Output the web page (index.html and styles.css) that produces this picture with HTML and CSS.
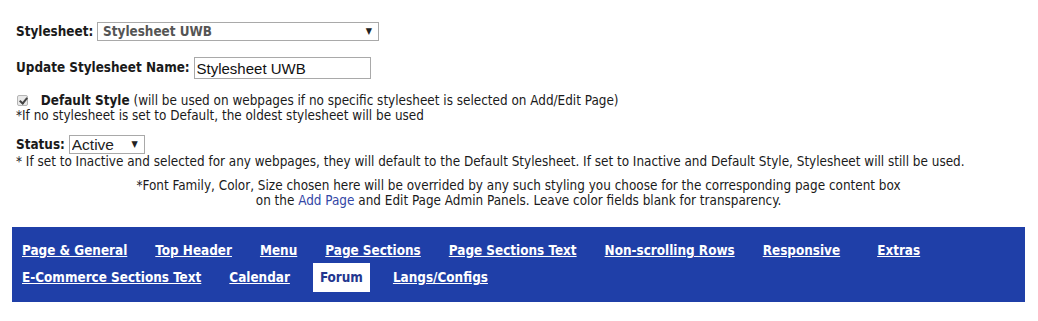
FILE: index.html
```html
<!DOCTYPE html>
<html lang="en">
<head>
  <meta charset="UTF-8">
  <title>Stylesheet Settings</title>
  <link rel="stylesheet" href="styles.css">
</head>
<body>
  <div class="settings">
    <div class="row row-first">
      <label class="label" for="sheetSelect">Stylesheet:</label>
      <span class="select-wrap">
        <select id="sheetSelect" class="select select-sheet">
          <option selected>Stylesheet UWB</option>
        </select>
        <span class="arrow">&#9660;</span>
      </span>
    </div>

    <div class="row row-name">
      <label class="label" for="sheetName">Update Stylesheet Name:</label>
      <input id="sheetName" class="text-input" type="text" value="Stylesheet UWB">
    </div>

    <div class="row row-default">
      <input id="defaultStyle" class="check" type="checkbox" checked>
      <label for="defaultStyle"><b>Default Style</b> (will be used on webpages if no specific stylesheet is selected on Add/Edit Page)</label>
      <div class="note">*If no stylesheet is set to Default, the oldest stylesheet will be used</div>
    </div>

    <div class="row row-status">
      <label class="label" for="statusSelect">Status:</label>
      <span class="select-wrap">
        <select id="statusSelect" class="select select-status">
          <option selected>Active</option>
          <option>Inactive</option>
        </select>
        <span class="arrow">&#9660;</span>
      </span>
      <div class="note">* If set to Inactive and selected for any webpages, they will default to the Default Stylesheet. If set to Inactive and Default Style, Stylesheet will still be used.</div>
    </div>

    <p class="center-note">
      *Font Family, Color, Size chosen here will be overrided by any such styling you choose for the corresponding page content box<br>
      on the <a href="#">Add Page</a> and Edit Page Admin Panels. Leave color fields blank for transparency.
    </p>
  </div>

  <div class="tabs">
    <div class="tab-row">
      <a href="#">Page &amp; General</a>
      <a href="#">Top Header</a>
      <a href="#">Menu</a>
      <a href="#">Page Sections</a>
      <a href="#">Page Sections Text</a>
      <a href="#">Non-scrolling Rows</a>
      <a href="#">Responsive</a>
      <a href="#" class="tab-wide">Extras</a>
    </div>
    <div class="tab-row">
      <a href="#">E-Commerce Sections Text</a>
      <a href="#">Calendar</a>
      <a href="#" class="active">Forum</a>
      <a href="#">Langs/Configs</a>
    </div>
  </div>
</body>
</html>
```

FILE: styles.css
```css
body {
  font-family: "DejaVu Sans Condensed", "DejaVu Sans", sans-serif;
  font-size: 13.4px;
  color: #1a1a1a;
  margin: 0;
  padding: 0 13px 0 12px;
}
.settings {
  padding: 22px 4px 0;
}
.row {
  line-height: 15px;
}
.label {
  font-weight: bold;
}
.select-wrap {
  position: relative;
  display: inline-block;
  vertical-align: middle;
}
.select {
  -webkit-appearance: none;
  appearance: none;
  border: 1px solid #a9a9a9;
  border-radius: 0;
  background: #fff;
  margin: 0;
  height: 19px;
  outline: none;
}
.select-sheet {
  width: 282px;
  padding: 0 0 0 5px;
  font-family: "DejaVu Sans Condensed", sans-serif;
  font-size: 13.4px;
  font-weight: bold;
  color: #555;
}
.select-status {
  width: 76px;
  padding: 0 0 0 2px;
  font-family: "Liberation Sans", Arial, sans-serif;
  font-size: 15.5px;
  color: #222;
}
.arrow {
  position: absolute;
  right: 7px;
  top: 4px;
  font-size: 9px;
  line-height: 10px;
  color: #222;
  pointer-events: none;
}
.row-name {
  margin-top: 16px;
}
.text-input {
  width: 177px;
  height: 22px;
  box-sizing: border-box;
  border: 1px solid #a9a9a9;
  padding: 0 2px;
  margin: 0;
  font-family: "Liberation Sans", Arial, sans-serif;
  font-size: 15px;
  color: #111;
  vertical-align: middle;
}
.row-default {
  margin-top: 14px;
}
.check {
  -webkit-appearance: none;
  appearance: none;
  position: relative;
  width: 11px;
  height: 11px;
  margin: 0 9px 0 1px;
  border: 1px solid #b5b5b5;
  border-radius: 2px;
  background: #e9e9e9;
  vertical-align: -1px;
}
.check:checked::after {
  content: "";
  position: absolute;
  left: 3px;
  top: 0;
  width: 3px;
  height: 6px;
  border: solid #444;
  border-width: 0 2px 2px 0;
  transform: rotate(40deg);
}
.row-status {
  margin-top: 12px;
}
.center-note {
  text-align: center;
  margin: 9px 0 0;
  line-height: 15px;
}
.center-note a {
  color: #3347a6;
  text-decoration: none;
}
.tabs {
  margin-top: 19px;
  background: #1f3fa8;
  padding: 10px 3px 11px;
}
.tab-row {
  display: flex;
  gap: 14px;
}
.tab-row a {
  color: #fff;
  font-weight: bold;
  line-height: 15px;
  padding: 6px 7px;
  white-space: nowrap;
}
.tab-row a.tab-wide {
  margin-left: 9px;
}
.tab-row a.active {
  background: #fff;
  color: #23368f;
  text-decoration: none;
  padding: 7px;
  margin: -1px 2px;
}
```
